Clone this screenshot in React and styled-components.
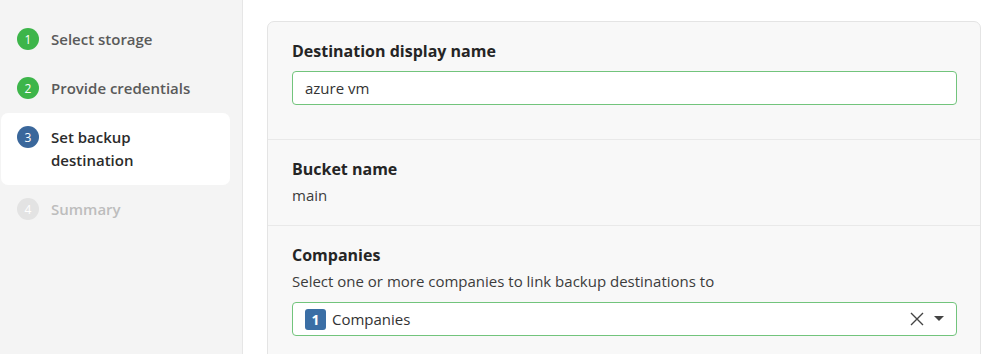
import React from 'react';
import styled, { createGlobalStyle } from 'styled-components';

const GlobalStyle = createGlobalStyle`
  html, body {
    margin: 0;
    padding: 0;
    background: #ffffff;
    font-family: "Open Sans", "Noto Sans", sans-serif;
  }
  * { box-sizing: border-box; }
`;

const Layout = styled.div`
  display: flex;
  height: 354px;
  overflow: hidden;
`;

const Sidebar = styled.nav`
  width: 243px;
  flex-shrink: 0;
  background: #f4f4f4;
  border-right: 1px solid #e6e6e6;
  padding: 15px 12px 0 1px;
`;

const StepList = styled.ul`
  list-style: none;
  margin: 0;
  padding: 0;
`;

const Step = styled.li`
  display: flex;
  align-items: flex-start;
  gap: 12px;
  padding: 13px 16px;
  border-radius: 7px;
  background: ${({ active }) => (active ? '#ffffff' : 'transparent')};
  font-size: 15px;
  font-weight: 600;
  line-height: 23px;
  color: ${({ state }) =>
    state === 'active' ? '#2b2b2b' : state === 'todo' ? '#bdbdbd' : '#5a5a5a'};
`;

const StepNumber = styled.span`
  flex-shrink: 0;
  width: 22px;
  height: 22px;
  border-radius: 50%;
  display: flex;
  align-items: center;
  justify-content: center;
  font-size: 12px;
  font-weight: 400;
  color: #ffffff;
  background: ${({ state }) =>
    state === 'active' ? '#3a679b' : state === 'todo' ? '#e3e3e3' : '#3db54a'};
`;

const Main = styled.main`
  flex: 1;
  padding: 21px 15px 0 24px;
`;

const Card = styled.div`
  background: #f8f8f8;
  border: 1px solid #e4e4e4;
  border-radius: 7px;
`;

const Section = styled.section`
  padding: 18px 23px ${({ bottom }) => bottom}px 24px;
  border-top: ${({ first }) => (first ? 'none' : '1px solid #e9e9e9')};
  display: flex;
  flex-direction: column;
`;

const Label = styled.div`
  font-size: 16px;
  font-weight: 700;
  line-height: 22px;
  color: #252525;
`;

const Text = styled.div`
  margin-top: 4px;
  font-size: 15px;
  line-height: 22px;
  color: #3c3c3c;
`;

const Field = styled.div`
  margin-top: ${({ gap }) => gap}px;
  height: 34px;
  background: #ffffff;
  border: 1px solid #72c47c;
  border-radius: 4px;
  display: flex;
  align-items: center;
  padding: 0 12px;
  font-size: 15px;
  color: #333333;
`;

const Grow = styled.div`
  flex: 1;
  display: flex;
  align-items: center;
  gap: 6px;
`;

const Badge = styled.span`
  width: 21px;
  height: 21px;
  border-radius: 3px;
  background: #3a6ea5;
  color: #ffffff;
  font-size: 14px;
  font-weight: 700;
  display: flex;
  align-items: center;
  justify-content: center;
`;

const Controls = styled.div`
  display: flex;
  align-items: center;
  gap: 9px;
  color: #444444;
`;

const steps = [
  { n: 1, label: 'Select storage', state: 'done' },
  { n: 2, label: 'Provide credentials', state: 'done' },
  { n: 3, label: <>Set backup<br />destination</>, state: 'active' },
  { n: 4, label: 'Summary', state: 'todo' },
];

export default function App() {
  return (
    <>
      <GlobalStyle />
      <Layout>
        <Sidebar>
          <StepList>
            {steps.map((s) => (
              <Step key={s.n} state={s.state} active={s.state === 'active'}>
                <StepNumber state={s.state}>{s.n}</StepNumber>
                <span>{s.label}</span>
              </Step>
            ))}
          </StepList>
        </Sidebar>
        <Main>
          <Card>
            <Section first bottom={34}>
              <Label>Destination display name</Label>
              <Field gap={9}>azure vm</Field>
            </Section>
            <Section bottom={19}>
              <Label>Bucket name</Label>
              <Text>main</Text>
            </Section>
            <Section bottom={24}>
              <Label>Companies</Label>
              <Text>Select one or more companies to link backup destinations to</Text>
              <Field gap={10}>
                <Grow>
                  <Badge>1</Badge>
                  <span>Companies</span>
                </Grow>
                <Controls>
                  <svg width="16" height="16" viewBox="0 0 16 16" fill="none" stroke="currentColor" strokeWidth="1.4">
                    <path d="M2 2 L14 14 M14 2 L2 14" />
                  </svg>
                  <svg width="10" height="6" viewBox="0 0 10 6" fill="currentColor">
                    <path d="M0 0 H10 L5 5 Z" />
                  </svg>
                </Controls>
              </Field>
            </Section>
          </Card>
        </Main>
      </Layout>
    </>
  );
}
